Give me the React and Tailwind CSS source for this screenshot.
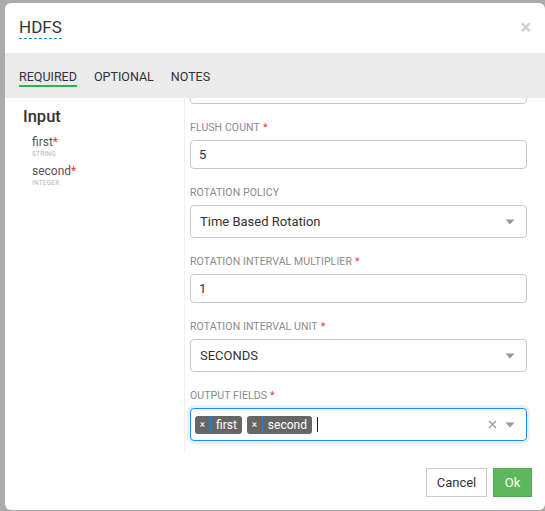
import React from "react";

const font = { fontFamily: "Roboto, 'Liberation Sans', sans-serif" };

function Caret() {
  return (
    <svg width="10" height="6" viewBox="0 0 10 6" className="shrink-0">
      <path d="M0.5 0.5 L9.5 0.5 L5 5.5 Z" fill="#999" />
    </svg>
  );
}

function Label({ text, required }) {
  return (
    <div className="h-[17px] pt-[1px] leading-[16px] mb-[4px] text-[10.5px] uppercase text-[#8a8a8a] tracking-[0.1px]">
      {text}
      {required && <span className="text-[#e53935] ml-[3px]">*</span>}
    </div>
  );
}

function TextBox({ value, extra = "" }) {
  return (
    <div className={`h-[29px] w-[337px] border border-[#c8c8c8] rounded-[4px] flex items-center px-[8px] text-[13px] text-[#333] ${extra}`}>
      {value}
    </div>
  );
}

function SelectBox({ value }) {
  return (
    <div className="h-[33px] w-[337px] border border-[#c8c8c8] rounded-[4px] flex items-center justify-between pl-[9px] pr-[11px] text-[13px] text-[#333]">
      <span>{value}</span>
      <Caret />
    </div>
  );
}

function Tag({ label }) {
  return (
    <div className="h-[18px] flex items-stretch bg-[#666] rounded-[3px] text-white text-[12px]">
      <span className="w-[16px] flex items-center justify-center text-[10px] border-r border-[#3a78c2]">×</span>
      <span className="flex items-center pl-[5px] pr-[5px]">{label}</span>
    </div>
  );
}

export default function App() {
  return (
    <div className="w-[545px] h-[511px] overflow-hidden bg-[#ababab] pl-[5px] pt-[3px]" style={font}>
      <div className="w-[540px] h-[507px] bg-white rounded-[6px] flex flex-col overflow-hidden">
        {/* header */}
        <div className="h-[50px] shrink-0 flex items-center justify-between pl-[14px] pr-[14px]">
          <span className="text-[17px] text-[#333] leading-[20px] pb-[1px] border-b border-dashed border-[#1a8fe0]">
            HDFS
          </span>
          <span className="text-[20px] font-bold text-[#cfcfcf] leading-none -mt-[3px]">×</span>
        </div>

        {/* tabs */}
        <div className="h-[45px] shrink-0 bg-[#ebebeb] flex items-center gap-[17px] pl-[14px] text-[12.5px] text-[#333]">
          <span className="border-b-2 border-[#2eb24a] pt-[4px] pb-[1px] leading-[15px]">REQUIRED</span>
          <span className="pt-[4px] pb-[3px] leading-[15px]">OPTIONAL</span>
          <span className="pt-[4px] pb-[3px] leading-[15px]">NOTES</span>
        </div>

        {/* body */}
        <div className="h-[355px] shrink-0 flex">
          <div className="w-[179px] shrink-0 pl-[18px] pt-[8px]">
            <div className="text-[16.5px] font-medium text-[#333] leading-[22px]">Input</div>
            <div className="pl-[9px] mt-[7px] flex flex-col gap-[5px]">
              {[
                ["first", "STRING"],
                ["second", "INTEGER"],
              ].map(([n, t]) => (
                <div key={n}>
                  <div className="text-[12px] text-[#555] leading-[15px]">
                    {n}
                    <span className="text-[#e53935]">*</span>
                  </div>
                  <div className="text-[6.5px] text-[#b5b5b5] leading-[9px] tracking-[0.2px]">{t}</div>
                </div>
              ))}
            </div>
          </div>

          <div className="flex-1 border-l border-[#f0f0f0] pl-[5px] overflow-hidden">
            <div className="flex flex-col gap-[15px] -mt-[23px]">
              <TextBox value="" />
              <div>
                <Label text="Flush Count" required />
                <TextBox value="5" />
              </div>
              <div>
                <Label text="Rotation Policy" />
                <SelectBox value="Time Based Rotation" />
              </div>
              <div>
                <Label text="Rotation Interval Multiplier" required />
                <TextBox value="1" />
              </div>
              <div>
                <Label text="Rotation Interval Unit" required />
                <SelectBox value="SECONDS" />
              </div>
              <div>
                <Label text="Output Fields" required />
                <div className="h-[33px] w-[337px] border border-[#1e88ff] rounded-[4px] shadow-[0_0_0_3px_rgba(0,126,255,0.1)] flex items-center pl-[4px] pr-[11px]">
                  <div className="flex items-center gap-[5px]">
                    <Tag label="first" />
                    <Tag label="second" />
                    <span className="w-px h-[15px] bg-[#222]" />
                  </div>
                  <div className="ml-auto flex items-center gap-[8px]">
                    <svg width="9" height="9" viewBox="0 0 9 9">
                      <path d="M1 1 L8 8 M8 1 L1 8" stroke="#999" strokeWidth="1.4" />
                    </svg>
                    <Caret />
                  </div>
                </div>
              </div>
            </div>
          </div>
        </div>

        {/* footer */}
        <div className="flex justify-end items-start gap-[6px] pt-[15px] pr-[13px]">
          <button className="h-[29px] w-[61px] border border-[#ccc] bg-white text-[13px] text-[#333]">Cancel</button>
          <button className="h-[29px] w-[39px] border border-[#4cae4c] bg-[#5cb85c] text-[13px] text-white">Ok</button>
        </div>
      </div>
    </div>
  );
}
